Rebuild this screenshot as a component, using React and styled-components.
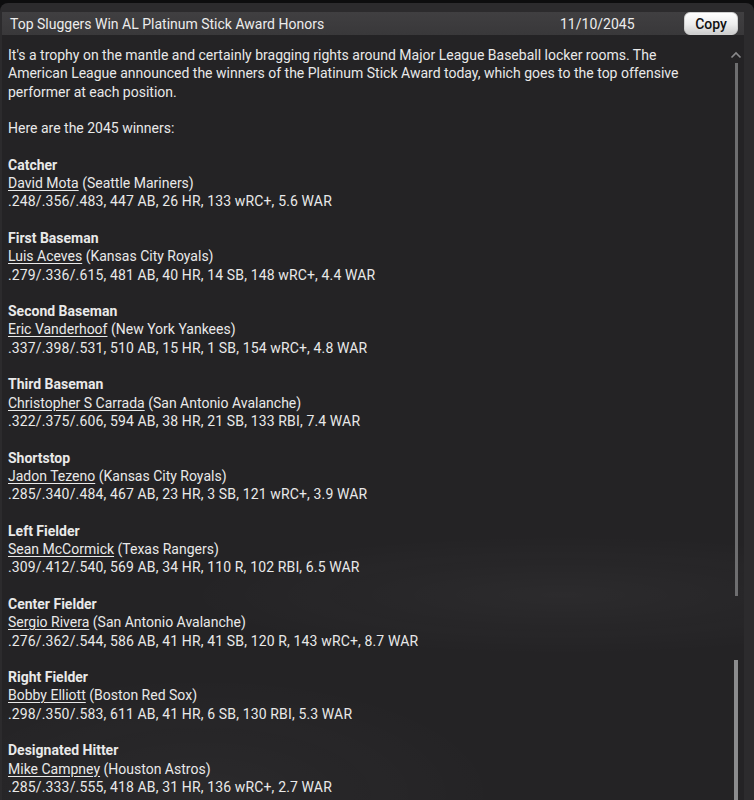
import React from 'react';
import styled, { createGlobalStyle } from 'styled-components';

const winners = [
  { pos: 'Catcher', name: 'David Mota', team: 'Seattle Mariners', line: '.248/.356/.483, 447 AB, 26 HR, 133 wRC+, 5.6 WAR' },
  { pos: 'First Baseman', name: 'Luis Aceves', team: 'Kansas City Royals', line: '.279/.336/.615, 481 AB, 40 HR, 14 SB, 148 wRC+, 4.4 WAR' },
  { pos: 'Second Baseman', name: 'Eric Vanderhoof', team: 'New York Yankees', line: '.337/.398/.531, 510 AB, 15 HR, 1 SB, 154 wRC+, 4.8 WAR' },
  { pos: 'Third Baseman', name: 'Christopher S Carrada', team: 'San Antonio Avalanche', line: '.322/.375/.606, 594 AB, 38 HR, 21 SB, 133 RBI, 7.4 WAR' },
  { pos: 'Shortstop', name: 'Jadon Tezeno', team: 'Kansas City Royals', line: '.285/.340/.484, 467 AB, 23 HR, 3 SB, 121 wRC+, 3.9 WAR' },
  { pos: 'Left Fielder', name: 'Sean McCormick', team: 'Texas Rangers', line: '.309/.412/.540, 569 AB, 34 HR, 110 R, 102 RBI, 6.5 WAR' },
  { pos: 'Center Fielder', name: 'Sergio Rivera', team: 'San Antonio Avalanche', line: '.276/.362/.544, 586 AB, 41 HR, 41 SB, 120 R, 143 wRC+, 8.7 WAR' },
  { pos: 'Right Fielder', name: 'Bobby Elliott', team: 'Boston Red Sox', line: '.298/.350/.583, 611 AB, 41 HR, 6 SB, 130 RBI, 5.3 WAR' },
  { pos: 'Designated Hitter', name: 'Mike Campney', team: 'Houston Astros', line: '.285/.333/.555, 418 AB, 31 HR, 136 wRC+, 2.7 WAR' },
];

const App = () => (
  <>
    <GlobalStyle />
    <Frame>
      <Panel>
        <Header>
          <Title>Top Sluggers Win AL Platinum Stick Award Honors</Title>
          <DateText>11/10/2045</DateText>
          <CopyButton>Copy</CopyButton>
        </Header>
        <Body>
          <Article>
            <Para>
              It's a trophy on the mantle and certainly bragging rights around Major League Baseball locker rooms. The
              <br />
              American League announced the winners of the Platinum Stick Award today, which goes to the top offensive
              <br />
              performer at each position.
            </Para>
            <Para>Here are the 2045 winners:</Para>
            {winners.map((w) => (
              <Para key={w.pos}>
                <Position>{w.pos}</Position>
                <div>
                  <PlayerLink>{w.name}</PlayerLink> ({w.team})
                </div>
                <Stats>{w.line}</Stats>
              </Para>
            ))}
          </Article>
          <ScrollBar>
            <Chevron viewBox="0 0 12 8">
              <path d="M1.5 6.5 L6 2 L10.5 6.5" fill="none" stroke="#8a8a8c" strokeWidth="1.6" />
            </Chevron>
            <Track />
            <Thumb />
          </ScrollBar>
        </Body>
      </Panel>
    </Frame>
  </>
);

export default App;

const GlobalStyle = createGlobalStyle`
  body {
    margin: 0;
    background: #121213;
    font-family: Roboto, "Liberation Sans", sans-serif;
  }
`;

const Frame = styled.div`
  width: 754px;
  height: 800px;
  overflow: hidden;
  padding-top: 3px;
  box-sizing: border-box;
  background: #0d0d0e;
`;

const Panel = styled.div`
  height: 100%;
  box-sizing: border-box;
  background: #2c2b2d;
  border-radius: 8px 8px 0 0;
  padding: 9px 10px 0 2px;
  display: flex;
  flex-direction: column;
`;

const Header = styled.div`
  height: 26px;
  display: flex;
  align-items: center;
  background: linear-gradient(#403f41, #39383a);
  padding: 0 6px 0 8px;
  color: #ececec;
  font-size: 14px;
`;

const Title = styled.div`
  flex: 1;
`;

const DateText = styled.div`
  width: 124px;
`;

const CopyButton = styled.button`
  width: 54px;
  height: 23px;
  border: 1px solid #cfcfcf;
  border-radius: 6px;
  background: linear-gradient(#ffffff, #ececec 55%, #cdcdcd);
  color: #111;
  font-family: Roboto, "Liberation Sans", sans-serif;
  font-size: 14px;
  font-weight: 500;
  padding: 0;
`;

const Body = styled.div`
  flex: 1;
  display: flex;
  background:
    radial-gradient(ellipse 380px 60px at 560px 560px, rgba(255, 255, 255, 0.035), transparent),
    radial-gradient(ellipse 300px 120px at 200px 760px, rgba(255, 255, 255, 0.03), transparent),
    #242325;
`;

const Article = styled.div`
  flex: 1;
  padding: 11px 0 0 6px;
  color: #e9e9e9;
  font-size: 14px;
  line-height: 18.3px;
`;

const Para = styled.div`
  margin-bottom: 18.3px;
  white-space: nowrap;
`;

const Position = styled.div`
  font-weight: 700;
`;

const PlayerLink = styled.span`
  text-decoration: underline;
  text-underline-offset: 2px;
`;

const Stats = styled.div`
  letter-spacing: 0.14px;
`;

const ScrollBar = styled.div`
  width: 16px;
  display: flex;
  flex-direction: column;
  align-items: center;
  padding-top: 16px;
`;

const Chevron = styled.svg`
  width: 12px;
  height: 8px;
`;

const Track = styled.div`
  width: 3px;
  height: 533px;
  margin-top: 4px;
  background: #6e6e70;
`;

const Thumb = styled.div`
  width: 4px;
  flex: 1;
  margin-top: 64px;
  background: #8c8c8e;
`;
